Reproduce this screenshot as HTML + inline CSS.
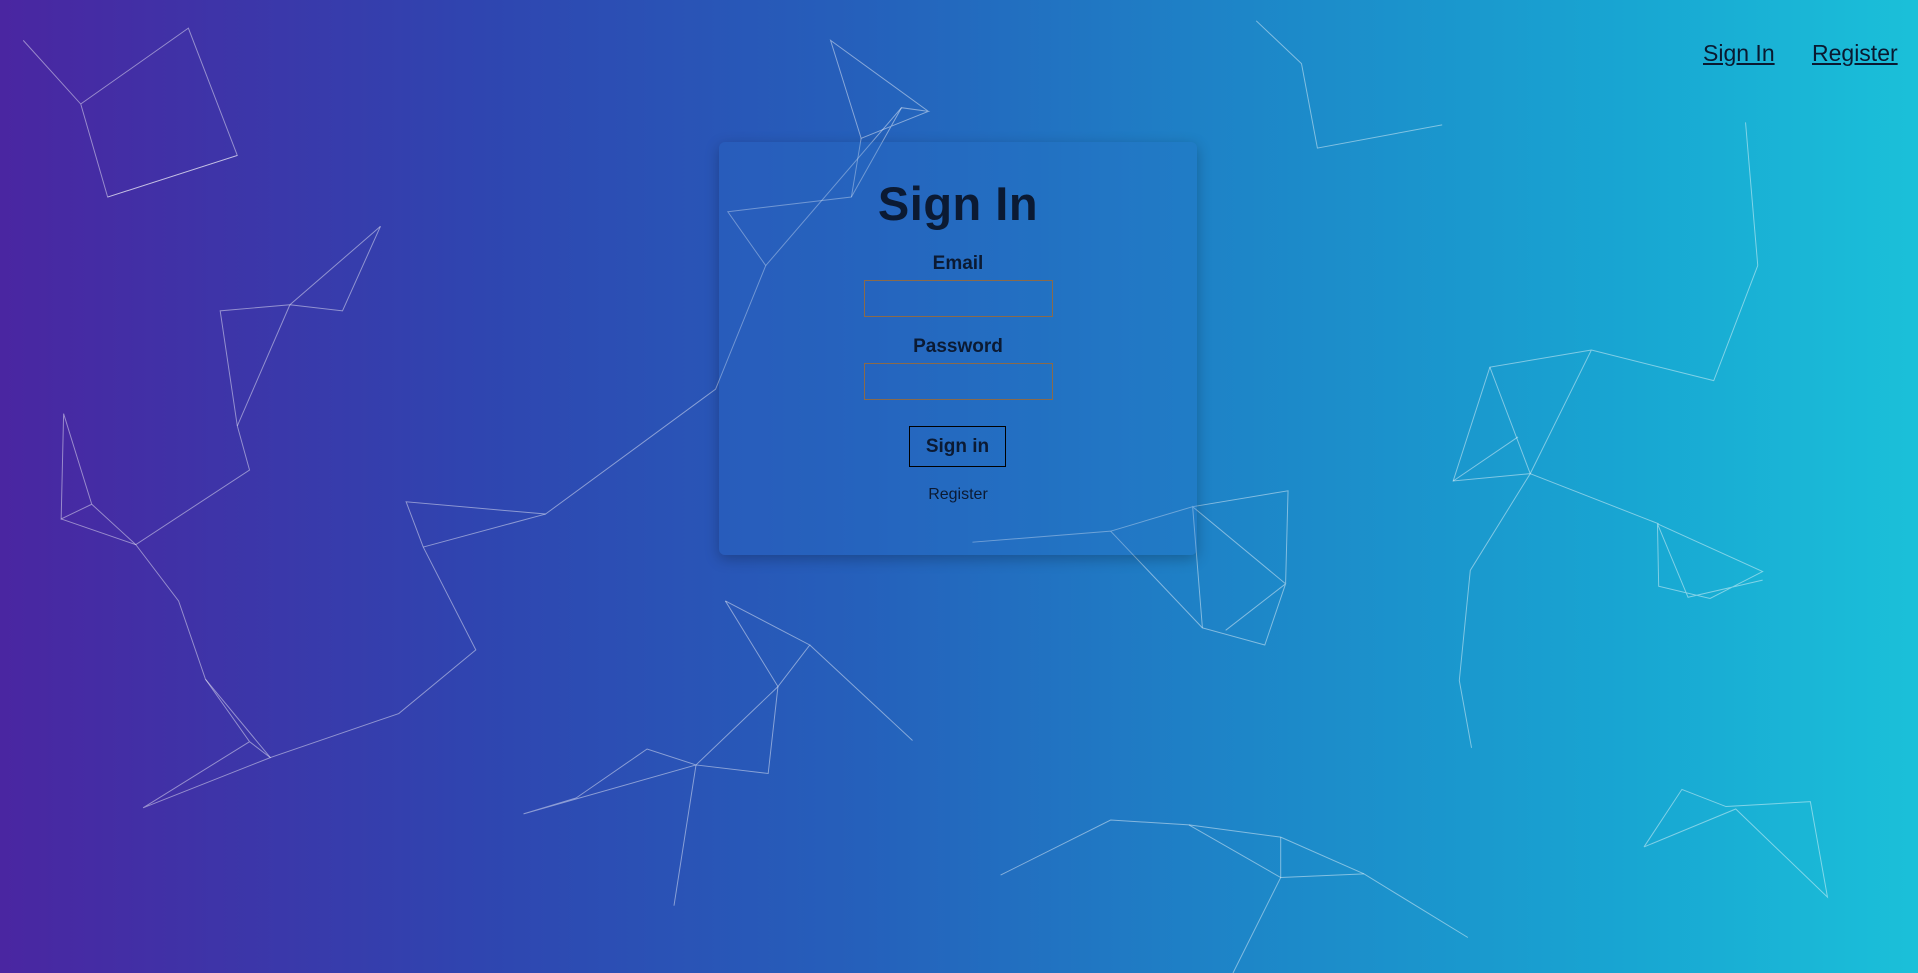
<!DOCTYPE html>
<html><head><meta charset="utf-8"><style>
html,body{margin:0;width:1918px;height:973px;overflow:hidden}
body{background:linear-gradient(90deg,#4a26a1 0%,#2f45b0 25%,#2560bb 45%,#1d86c8 65%,#18a6d2 85%,#1bc0d9 100%);font-family:"Liberation Sans",sans-serif;position:relative}
svg{position:absolute;left:0;top:0}
.nav a{position:absolute;top:40px;font-size:23px;color:#0a1930;text-decoration:underline}
.card{position:absolute;left:719px;top:142px;width:478px;height:413px;border-radius:6px;background:rgba(40,110,200,0.25);box-shadow:0 4px 14px rgba(0,0,0,0.25);text-align:center;color:#0b1a33}
h1{margin:0;position:absolute;top:34px;width:100%;font-size:47px;font-weight:bold;letter-spacing:0.5px}
.lbl{position:absolute;width:100%;font-size:19px;font-weight:bold}
.inp{position:absolute;left:145px;width:187px;height:35px;border:1px solid #8a6a4a}
.btn{position:absolute;left:190px;top:284px;width:95px;height:39px;border:1.5px solid #000;font-size:19px;font-weight:bold;line-height:39px}
.reg{position:absolute;top:344px;width:100%;font-size:16px}
</style></head><body>
<svg width="1918" height="973" viewBox="0 0 1568 795" preserveAspectRatio="none" fill="none" stroke="rgba(255,255,255,0.45)" stroke-width="0.8">
<polyline points="19,33 66,85 154,23 194,127 88,161 66,85"/>
<polyline points="88,161 194,127"/>
<polyline points="311,185 237,249 180,254 194,348 204,384 111,445 75,412 50,424 52,338 75,412"/>
<polyline points="237,249 280,254 311,185"/><polyline points="237,249 194,348"/>
<polyline points="50,424 111,445 146,491 168,555 204,606 221,619 117,660 204,606"/>
<polyline points="168,555 221,619 326,583 389,531 346,447 332,410 446,420 585,318 626,217 595,173 696,161 737,88 759,91 704,113 679,33 759,91"/>
<polyline points="446,420 346,447"/><polyline points="696,161 704,113"/><polyline points="626,217 737,88"/>
<polyline points="593,491 662,527 636,561 628,632 569,625 529,612 471,652 428,665 569,625"/><polyline points="593,491 636,561 569,625"/><polyline points="662,527 746,605"/><polyline points="569,625 551,740"/>
<polyline points="1027,17 1064,52 1077,121 1179,102"/>
<polyline points="795,443 908,434 975,414 1053,401 1051,477 1034,527 983,513 975,414 1051,477 1002,515"/><polyline points="908,434 983,513"/>
<polyline points="1437,217 1401,311 1301,286 1218,300 1188,393 1251,387 1301,286"/><polyline points="1218,300 1251,387 1202,466 1193,556 1203,611"/><polyline points="1188,393 1241,357"/><polyline points="1251,387 1356,428"/><polyline points="1427,100 1437,217"/>
<polyline points="1355,428 1441,467 1398,489 1356,479 1355,428 1380,488 1441,474"/>
<polyline points="1344,692 1375,645 1411,659 1480,655 1494,733 1419,661 1344,692"/>
<polyline points="818,715 908,670 972,674 1047,684 1115,714 1200,766"/><polyline points="972,674 1047,717 1115,714"/><polyline points="1047,684 1047,717 1008,795"/>
</svg>
<div class="nav"><a style="left:1703px">Sign In</a><a style="left:1812px">Register</a></div>
<div class="card">
<h1>Sign In</h1>
<div class="lbl" style="top:111px">Email</div>
<div class="inp" style="top:138px"></div>
<div class="lbl" style="top:194px">Password</div>
<div class="inp" style="top:221px"></div>
<div class="btn">Sign in</div>
<div class="reg">Register</div>
</div>
</body></html>
